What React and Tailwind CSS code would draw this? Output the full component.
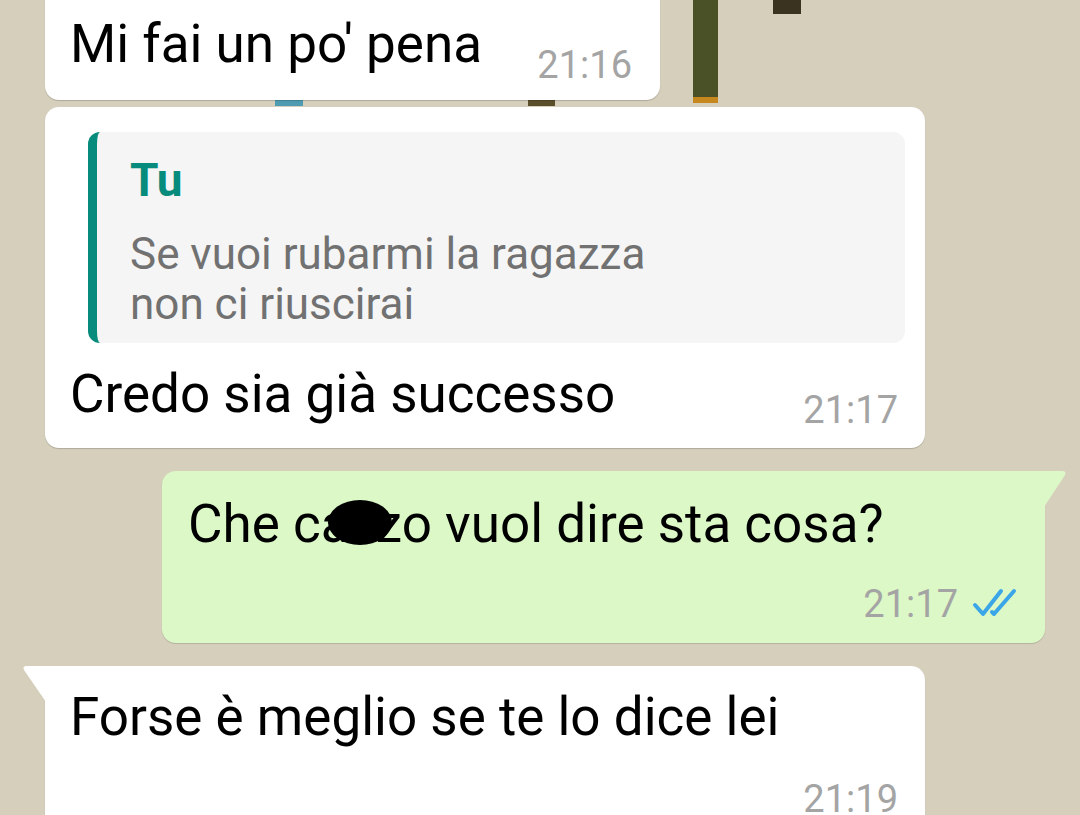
import { useState } from 'react'

function Time({ children, className = '' }) {
  return (
    <span className={`text-[38px] leading-[46px] text-[#a4a4a4] whitespace-nowrap ${className}`}>
      {children}
    </span>
  )
}

function DoubleTick() {
  return (
    <svg width="48" height="32" viewBox="0 0 48 32" fill="none" className="ml-[14px] mt-[6px]">
      <path d="M3 18 L11 27 L29 4" stroke="#3aa6e8" strokeWidth="4" strokeLinecap="round" strokeLinejoin="round" />
      <path d="M20 25 L22 27 L42 4" stroke="#3aa6e8" strokeWidth="4" strokeLinecap="round" strokeLinejoin="round" />
    </svg>
  )
}

export default function App() {
  const [messages] = useState([
    { id: 1, text: 'Mi fai un po\' pena', time: '21:16' },
  ])

  return (
    <div
      className="relative w-[1080px] h-[815px] overflow-hidden bg-[#d5cfbc] text-black"
      style={{ fontFamily: 'Roboto, "Noto Sans", sans-serif' }}
    >
      {/* wallpaper doodles */}
      <div className="absolute left-[693px] top-0 w-[25px] h-[103px] bg-[#4b5127]">
        <div className="absolute bottom-0 left-0 w-full h-[6px] bg-[#c7871f]" />
      </div>
      <div className="absolute left-[773px] top-0 w-[28px] h-[14px] bg-[#3a3320]" />
      <div className="absolute left-[275px] top-[100px] w-[28px] h-[6px] bg-[#4e9cb2]" />
      <div className="absolute left-[528px] top-[100px] w-[27px] h-[6px] bg-[#5b4f2b]" />

      <div className="relative flex flex-col">
        {/* bubble 1 */}
        {messages.map(m => (
          <div
            key={m.id}
            className="ml-[45px] mt-[-20px] w-[615px] h-[120px] bg-white rounded-[14px] shadow-[0_1px_1px_rgba(0,0,0,0.18)] flex items-start justify-between pl-[25px] pr-[28px] pt-[33px]"
          >
            <span className="text-[53px] leading-[62px] whitespace-nowrap">{m.text}</span>
            <Time className="mt-[29px]">{m.time}</Time>
          </div>
        ))}

        {/* bubble 2 with quote */}
        <div className="ml-[45px] mt-[7px] w-[880px] h-[341px] bg-white rounded-[14px] shadow-[0_1px_1px_rgba(0,0,0,0.18)] flex flex-col pt-[25px]">
          <div className="ml-[43px] mr-[20px] h-[211px] bg-[#f5f5f5] rounded-[12px] border-l-[9px] border-[#078b7c] pl-[33px] pt-[21px]">
            <div className="text-[46px] leading-[54px] font-bold text-[#078b7c]">Tu</div>
            <div className="mt-[22px] text-[44px] leading-[50px] text-[#717171]">
              Se vuoi rubarmi la ragazza
              <br />
              non ci riuscirai
            </div>
          </div>
          <div className="flex items-start justify-between pl-[25px] pr-[27px] mt-[20px]">
            <span className="text-[53px] leading-[62px]">Credo sia già successo</span>
            <Time className="mt-[24px]">21:17</Time>
          </div>
        </div>

        {/* bubble 3 outgoing */}
        <div className="relative ml-[162px] mt-[23px] w-[883px] h-[172px] bg-[#dcf8c7] rounded-[14px] rounded-tr-none shadow-[0_1px_1px_rgba(0,0,0,0.15)] flex flex-col pl-[26px] pr-[25px] pt-[22px]">
          <svg className="absolute right-[-22px] top-0" width="23" height="36" viewBox="0 0 23 36">
            <path d="M0 0 H18 Q23 0 21 4 L0 36 Z" fill="#dcf8c7" />
          </svg>
          <div className="relative text-[53px] leading-[62px]">
            Che cazzo vuol dire sta cosa?
            <span className="absolute left-[140px] top-[7px] w-[64px] h-[45px] rounded-[50%] bg-black" />
          </div>
          <div className="flex items-start justify-end mt-[26px]">
            <Time>21:17</Time>
            <DoubleTick />
          </div>
        </div>

        {/* bubble 4 incoming */}
        <div className="relative ml-[45px] mt-[23px] w-[880px] h-[200px] bg-white rounded-[14px] rounded-tl-none shadow-[0_1px_1px_rgba(0,0,0,0.18)] flex flex-col pl-[25px] pr-[27px] pt-[20px]">
          <svg className="absolute left-[-23px] top-0" width="24" height="36" viewBox="0 0 24 36">
            <path d="M24 0 H5 Q0 0 2 4 L24 36 Z" fill="#ffffff" />
          </svg>
          <span className="text-[53px] leading-[62px]">Forse è meglio se te lo dice lei</span>
          <div className="flex justify-end mt-[28px]">
            <Time>21:19</Time>
          </div>
        </div>
      </div>
    </div>
  )
}
